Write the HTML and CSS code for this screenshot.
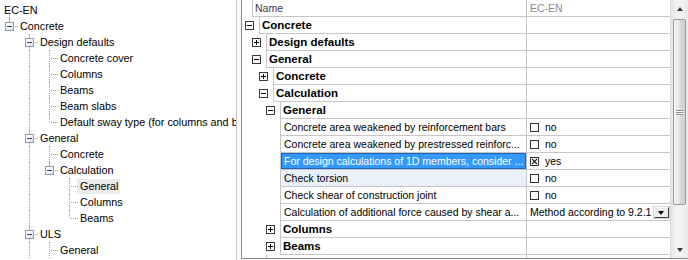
FILE: index.html
```html
<!DOCTYPE html>
<html lang="en">
<head>
  <meta charset="UTF-8">
  <title>Concrete setup</title>
  <link rel="stylesheet" href="styles.css">
</head>
<body>
  <div class="app">
    <div class="tree">
      <div class="node root"><span class="label">EC-EN</span></div>
      <div class="node">
        <span class="guide elbow"><span class="box"></span></span><span class="label">Concrete</span>
      </div>
      <div class="node">
        <span class="guide"></span><span class="guide tee"><span class="box"></span></span><span class="label">Design defaults</span>
      </div>
      <div class="node">
        <span class="guide"></span><span class="guide pipe"></span><span class="guide tee"></span><span class="label">Concrete cover</span>
      </div>
      <div class="node">
        <span class="guide"></span><span class="guide pipe"></span><span class="guide tee"></span><span class="label">Columns</span>
      </div>
      <div class="node">
        <span class="guide"></span><span class="guide pipe"></span><span class="guide tee"></span><span class="label">Beams</span>
      </div>
      <div class="node">
        <span class="guide"></span><span class="guide pipe"></span><span class="guide tee"></span><span class="label">Beam slabs</span>
      </div>
      <div class="node">
        <span class="guide"></span><span class="guide pipe"></span><span class="guide elbow"></span><span class="label">Default sway type (for columns and beams)</span>
      </div>
      <div class="node">
        <span class="guide"></span><span class="guide tee"><span class="box"></span></span><span class="label">General</span>
      </div>
      <div class="node">
        <span class="guide"></span><span class="guide pipe"></span><span class="guide tee"></span><span class="label">Concrete</span>
      </div>
      <div class="node">
        <span class="guide"></span><span class="guide pipe"></span><span class="guide elbow"><span class="box"></span></span><span class="label">Calculation</span>
      </div>
      <div class="node">
        <span class="guide"></span><span class="guide pipe"></span><span class="guide"></span><span class="guide tee"></span><span class="label sel">General</span>
      </div>
      <div class="node">
        <span class="guide"></span><span class="guide pipe"></span><span class="guide"></span><span class="guide tee"></span><span class="label">Columns</span>
      </div>
      <div class="node">
        <span class="guide"></span><span class="guide pipe"></span><span class="guide"></span><span class="guide elbow"></span><span class="label">Beams</span>
      </div>
      <div class="node">
        <span class="guide"></span><span class="guide tee"><span class="box"></span></span><span class="label">ULS</span>
      </div>
      <div class="node">
        <span class="guide"></span><span class="guide pipe"></span><span class="guide tee"></span><span class="label">General</span>
      </div>
    </div>

    <div class="split"></div>

    <div class="grid">
      <div class="rows">
        <div class="row head">
          <div class="indent"></div>
          <div class="cell name">Name</div>
          <div class="cell value">EC-EN</div>
        </div>
        <div class="row cat l0">
          <div class="indent"><span class="xbox minus"></span></div>
          <div class="cell name">Concrete</div>
          <div class="cell value"></div>
        </div>
        <div class="row cat l1">
          <div class="indent"><span class="xbox plus"></span></div>
          <div class="cell name">Design defaults</div>
          <div class="cell value"></div>
        </div>
        <div class="row cat l1">
          <div class="indent"><span class="xbox minus"></span></div>
          <div class="cell name">General</div>
          <div class="cell value"></div>
        </div>
        <div class="row cat l2">
          <div class="indent"><span class="xbox plus"></span></div>
          <div class="cell name">Concrete</div>
          <div class="cell value"></div>
        </div>
        <div class="row cat l2">
          <div class="indent"><span class="xbox minus"></span></div>
          <div class="cell name">Calculation</div>
          <div class="cell value"></div>
        </div>
        <div class="row cat l3">
          <div class="indent"><span class="xbox minus"></span></div>
          <div class="cell name">General</div>
          <div class="cell value"></div>
        </div>
        <div class="row l3">
          <div class="indent"></div>
          <div class="cell name">Concrete area weakened by reinforcement bars</div>
          <div class="cell value"><span class="chk"></span>no</div>
        </div>
        <div class="row l3">
          <div class="indent"></div>
          <div class="cell name">Concrete area weakened by prestressed reinforc...</div>
          <div class="cell value"><span class="chk"></span>no</div>
        </div>
        <div class="row l3 selected">
          <div class="indent"></div>
          <div class="cell name">For design calculations of 1D members, consider ...</div>
          <div class="cell value">
            <svg class="chk-x" width="9" height="9" viewBox="0 0 9 9"><rect x="0.5" y="0.5" width="8" height="8" fill="#fff" stroke="#333"/><path d="M2 2 L7 7 M7 2 L2 7" stroke="#222" stroke-width="1.1"/></svg>yes
          </div>
        </div>
        <div class="row l3 hover">
          <div class="indent"></div>
          <div class="cell name">Check torsion</div>
          <div class="cell value"><span class="chk"></span>no</div>
        </div>
        <div class="row l3">
          <div class="indent"></div>
          <div class="cell name">Check shear of construction joint</div>
          <div class="cell value"><span class="chk"></span>no</div>
        </div>
        <div class="row l3">
          <div class="indent"></div>
          <div class="cell name">Calculation of additional force caused by shear a...</div>
          <div class="cell value"><span class="combo-text">Method according to 9.2.1</span><span class="drop"></span></div>
        </div>
        <div class="row cat l3">
          <div class="indent"><span class="xbox plus"></span></div>
          <div class="cell name">Columns</div>
          <div class="cell value"></div>
        </div>
        <div class="row cat l3">
          <div class="indent"><span class="xbox plus"></span></div>
          <div class="cell name">Beams</div>
          <div class="cell value"></div>
        </div>
        <div class="row cat l1">
          <div class="indent"></div>
          <div class="cell name"></div>
          <div class="cell value"></div>
        </div>
      </div>
      <div class="scrollbar">
        <div class="sb-btn"><span class="arrow up"></span></div>
        <div class="thumb"><span class="grip"></span></div>
        <div class="track"></div>
        <div class="sb-btn"><span class="arrow down"></span></div>
      </div>
    </div>
  </div>
</body>
</html>
```

FILE: styles.css
```css
html, body {
  margin: 0;
  padding: 0;
  background: #fff;
}
body {
  width: 688px;
  height: 260px;
  overflow: hidden;
  font-family: "Liberation Sans", Arial, sans-serif;
  font-size: 10.8px;
  color: #000;
}
.app {
  display: flex;
  height: 260px;
}

/* left tree */
.tree {
  width: 237px;
  box-sizing: border-box;
  border-right: 1px solid #c8c8c8;
  padding-top: 2px;
  overflow: hidden;
  flex: none;
}
.node {
  display: flex;
  align-items: center;
  height: 16px;
  white-space: nowrap;
}
.node.root {
  position: relative;
  padding-left: 4px;
}
.node.root::after {
  content: '';
  position: absolute;
  left: 9px;
  top: 13px;
  bottom: 0;
  border-left: 1px dotted #a0a0a0;
}
.guide {
  flex: none;
  width: 20px;
  height: 16px;
  position: relative;
}
.guide.pipe::before,
.guide.tee::before,
.guide.elbow::before {
  content: '';
  position: absolute;
  left: 9px;
  top: 0;
  bottom: 0;
  border-left: 1px dotted #a0a0a0;
}
.guide.elbow::before {
  bottom: 8px;
}
.guide.tee::after,
.guide.elbow::after {
  content: '';
  position: absolute;
  left: 11px;
  width: 7px;
  top: 8px;
  border-top: 1px dotted #a0a0a0;
}
.box {
  position: absolute;
  z-index: 1;
  left: 5px;
  top: 4px;
  width: 7px;
  height: 7px;
  border: 1px solid #8f9ba8;
  background: linear-gradient(135deg, #fff 30%, #d6dbe2);
}
.box::before {
  content: '';
  position: absolute;
  left: 1px;
  top: 3px;
  width: 5px;
  height: 1px;
  background: #24406e;
}
.label {
  padding: 0 2px 0 3px;
  margin-left: -3px;
  height: 15px;
  line-height: 15px;
}
.label.sel {
  background: #ececec;
}

.split {
  width: 4px;
  flex: none;
  background: #fbfbfb;
}

/* property grid */
.grid {
  flex: none;
  width: 447px;
  height: 259px;
  box-sizing: border-box;
  border-left: 1px solid #828790;
  border-bottom: 1px solid #828790;
  display: flex;
  overflow: hidden;
  font-size: 10.5px;
}
.rows {
  flex: 1;
  overflow: hidden;
}
.row {
  display: flex;
  height: 17px;
}
.indent {
  flex: none;
  box-sizing: border-box;
  width: 38px;
  display: flex;
  align-items: flex-start;
}
.head .indent { width: 10px; }
.l0 .indent { width: 17px; padding-left: 3px; }
.l1 .indent { width: 24px; padding-left: 10px; }
.l2 .indent { width: 31px; padding-left: 17px; }
.l3 .indent { width: 38px; padding-left: 24px; }
.cell {
  box-sizing: border-box;
  border-left: 1px solid #c6c6c6;
  border-bottom: 1px solid #c6c6c6;
  white-space: nowrap;
  overflow: hidden;
  line-height: 17px;
}
.cell.name {
  flex: 1;
  padding-left: 2px;
}
.cell.value {
  flex: none;
  width: 144px;
  padding-left: 3px;
  display: flex;
  align-items: center;
}
.head .cell.name { color: #3c3c3c; }
.head .cell.value { color: #8c8c8c; }
.cat .cell.name {
  font-weight: bold;
  font-size: 11.5px;
}
.row.l3:not(.cat) .cell.name {
  padding-left: 3px;
}
.selected .cell.name {
  background: #3399ff;
  color: #fff;
  box-shadow: inset 1px 1px 0 #1f62b8, inset -1px -1px 0 #1f62b8;
}
.hover .cell.name {
  background: #ebf1fa;
}
.xbox {
  position: relative;
  margin-top: 4px;
  width: 7px;
  height: 7px;
  border: 1px solid #3a3a3a;
  background: #fff;
}
.xbox::before {
  content: '';
  position: absolute;
  left: 1px;
  top: 3px;
  width: 5px;
  height: 1px;
  background: #000;
}
.xbox.plus::after {
  content: '';
  position: absolute;
  left: 3px;
  top: 1px;
  width: 1px;
  height: 5px;
  background: #000;
}
.chk {
  flex: none;
  width: 7px;
  height: 7px;
  border: 1px solid #333;
  background: #fff;
  margin-right: 6px;
}
.chk-x {
  flex: none;
  margin-right: 6px;
}
.combo-text {
  flex: 1;
  overflow: hidden;
}
.drop {
  flex: none;
  position: relative;
  width: 13px;
  height: 9px;
  margin: 0 1px 0 0;
  border: 1px solid;
  border-color: #fff #404040 #404040 #fff;
  background: #ececec;
  box-shadow: 0 0 0 1px #d4d4d4;
}
.drop::after {
  content: '';
  position: absolute;
  left: 3px;
  top: 3px;
  border-left: 3.5px solid transparent;
  border-right: 3.5px solid transparent;
  border-top: 4px solid #000;
}

/* scrollbar */
.scrollbar {
  flex: none;
  width: 18px;
  box-sizing: border-box;
  border-left: 1px solid #dcdcdc;
  background: linear-gradient(to right, #e6e6e6, #f2f2f2 30%, #f2f2f2 70%, #e9e9e9);
  display: flex;
  flex-direction: column;
  align-items: center;
}
.sb-btn {
  flex: none;
  height: 17px;
  width: 100%;
  display: flex;
  align-items: center;
  justify-content: center;
}
.arrow {
  width: 0;
  height: 0;
  border-left: 3.5px solid transparent;
  border-right: 3.5px solid transparent;
}
.arrow.up { border-bottom: 4px solid #3a3a3a; }
.arrow.down { border-top: 4px solid #3a3a3a; }
.thumb {
  flex: none;
  width: 13px;
  height: 186px;
  margin-top: 2px;
  box-sizing: border-box;
  border: 1px solid #989898;
  border-radius: 2px;
  background: linear-gradient(to right, #f4f4f4, #e8e8e8 45%, #d9d9d9 55%, #d0d0d0);
  display: flex;
  align-items: center;
  justify-content: center;
}
.grip {
  width: 7px;
  height: 5px;
  background: repeating-linear-gradient(to bottom, #8a8a8a 0 1px, #fff 1px 2px);
}
.track {
  flex: 1;
}
```
